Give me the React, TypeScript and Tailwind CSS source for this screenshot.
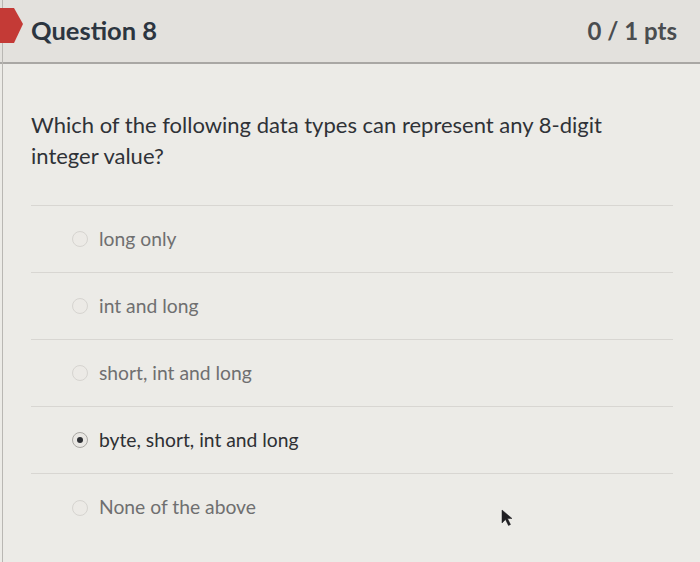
import React from "react";

const options = [
  { label: "long only", selected: false },
  { label: "int and long", selected: false },
  { label: "short, int and long", selected: false },
  { label: "byte, short, int and long", selected: true },
  { label: "None of the above", selected: false },
];

function Radio({ selected }: { selected: boolean }) {
  return (
    <span
      className={`flex h-[16px] w-[16px] shrink-0 items-center justify-center rounded-full border ${
        selected ? "border-[#a9a7a3] bg-[#e9e7e3]" : "border-[#d6d4d0] bg-[#eceae6]"
      }`}
    >
      {selected && <span className="h-[6px] w-[6px] rounded-full bg-[#2d2f33]" />}
    </span>
  );
}

export default function App() {
  return (
    <div
      className="relative h-[562px] w-[700px] overflow-hidden bg-[#ecebe7] text-[#2d3b45]"
      style={{ fontFamily: "Lato, 'Open Sans', sans-serif" }}
    >
      <div className="absolute left-[2px] top-0 h-full w-[1px] bg-[#b9b7b3]" />
      <header className="flex h-[64px] items-center justify-between border-b-2 border-[#a9a7a4] bg-[#e3e1dd] pl-[31px] pr-[23px] pb-[1px]">
        <h2 className="text-[25.5px] font-bold text-[#2c3540]">Question 8</h2>
        <span className="text-[24px] font-bold text-[#4a4d50]">0 / 1 pts</span>
      </header>
      <svg className="absolute left-0 top-[8px]" width="24" height="36" viewBox="0 0 24 36">
        <path d="M0 0 H14 L23 16 L14 35 H0 Z" fill="#c43a36" />
      </svg>
      <main className="pl-[31px] pr-[27px]">
        <p className="pt-[45px] pb-[34px] text-[22px] leading-[31px] text-[#2f3237] border-b border-[#d8d6d2]">
          Which of the following data types can represent any 8-digit
          <br />
          integer value?
        </p>
        <div className="flex flex-col">
          {options.map((o, i) => (
            <div
              key={o.label}
              className={`flex h-[67px] items-center gap-[11px] pl-[41px] ${
                i < options.length - 1 ? "border-b border-[#d8d6d2]" : ""
              }`}
            >
              <Radio selected={o.selected} />
              <span
                className={`text-[19.3px] ${
                  o.selected ? "text-[#2e3034]" : "text-[#6f6f70]"
                }`}
              >
                {o.label}
              </span>
            </div>
          ))}
        </div>
      </main>
      <svg className="absolute left-[501px] top-[509px]" width="14" height="18" viewBox="0 0 14 18">
        <path d="M1 1 L1 14 L4.5 10.5 L7.5 16.5 L9.5 15.5 L6.5 9.5 L11 9.5 Z" fill="#1f1f22" stroke="#1f1f22" strokeWidth="0.5" />
      </svg>
    </div>
  );
}
